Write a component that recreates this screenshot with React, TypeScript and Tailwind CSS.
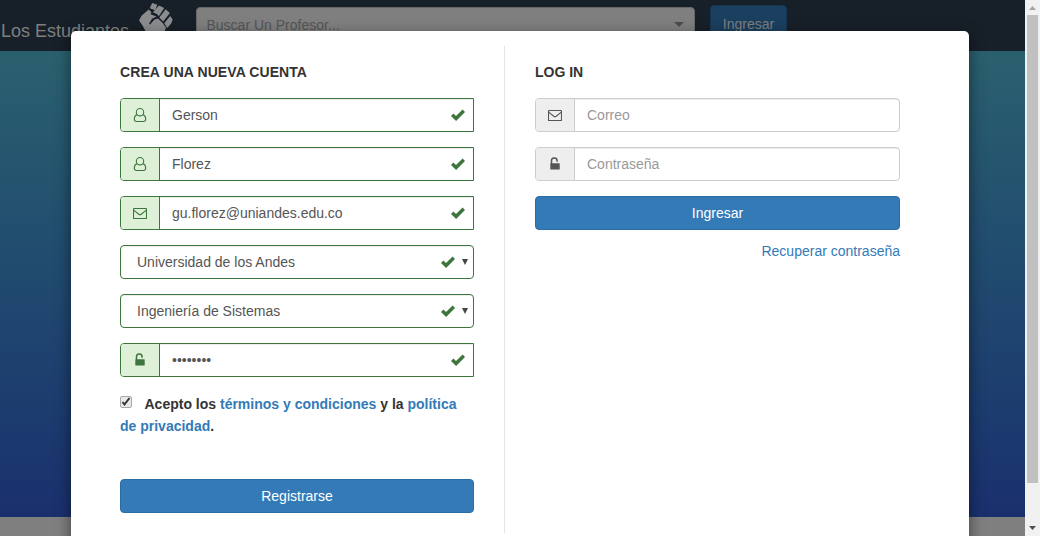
import type { ReactNode } from "react";

function UserIcon() {
  return (
    <svg width="14" height="16" viewBox="0 0 14 16" fill="none" stroke="currentColor" strokeWidth="1.100">
      <circle cx="7" cy="5.200" r="3.700" />
      <path d="M4 7.700C2.100 8.200 1.300 10.100 1.300 12c0 1.500.8 2.500 2.200 2.500h7c1.400 0 2.200-1 2.200-2.500 0-1.900-.8-3.800-2.700-4.300" />
    </svg>
  );
}

function MailIcon() {
  return (
    <svg width="14" height="14" viewBox="0 0 14 14" fill="none" stroke="currentColor" strokeWidth="1.100">
      <rect x=".5" y="2.500" width="13" height="10" rx=".5" />
      <path d="M.7 4.200C2.300 5.800 4.500 7.200 5.800 8.200q1.200.8 2.400 0C9.500 7.200 11.700 5.800 13.300 4.200" />
    </svg>
  );
}

function LockIcon() {
  return (
    <svg width="12" height="14" viewBox="0 0 12 14">
      <path d="M2.500 7V3.900a2.800 2.800 0 0 1 5.600-.2v1" fill="none" stroke="currentColor" strokeWidth="1.500" />
      <rect x="1.300" y="6.200" width="9.400" height="6.300" rx=".5" fill="currentColor" />
    </svg>
  );
}

function CheckIcon() {
  return (
    <svg width="14" height="12" viewBox="0 0 14 12" className="shrink-0 text-[#3c763d]">
      <path d="M0 6.900 2.400 4.600 5 6.900 11.600.6 14 3 5.100 11.900Z" fill="currentColor" />
    </svg>
  );
}

function Fist() {
  return (
    <svg width="36" height="36" viewBox="0 0 36 36" fill="#8a8c8e">
      <path d="m14.200 0 5.100 1.700-2.100 5.500-5.500-2Z" />
      <path d="m21 2.600 5.200 2.500-5.400 8.200-1.500-2.100-4.400-1.900Z" />
      <path d="m27.700 6.200 4.200 3.900-6.700 8.300-3.900-3.900Z" />
      <path d="m32.200 13 2.500 3.400-1.500 4-4 4.600-3-4.700Z" />
      <path d="m10.700 6.400 2.800 2.900-1 2 6 2.200-4.500 2.200-3 5 1 .9 4.500-5 3.500-1 4.200 4 3.800 5-2 5.400v7H9l-1.500-9-3-5.500L1 17.500l2.500-4.700Z" />
    </svg>
  );
}

function Field({ icon, text, valid = false }: { icon: ReactNode; text: string; valid?: boolean }) {
  return (
    <div className={`flex h-[34px] border ${valid ? "rounded-l border-[#3c763d]" : "rounded border-[#ccc]"}`}>
      <span className={`flex w-[39px] shrink-0 items-center justify-center rounded-l-[3px] border-r ${valid ? "border-[#3c763d] bg-[#dff0d8] text-[#3c763d]" : "border-[#ccc] bg-[#eee] text-[#555]"}`}>
        {icon}
      </span>
      <span className={`flex flex-1 items-center justify-between pr-[8.5px] pl-3 shadow-[inset_0_1px_1px_rgba(0,0,0,0.075)] ${valid ? "text-[#555]" : "text-[#999]"}`}>
        {text}
        {valid && <CheckIcon />}
      </span>
    </div>
  );
}

function Select({ text }: { text: string }) {
  return (
    <div className="flex h-[34px] items-center rounded border border-[#3c763d] pr-[5px] pl-4 text-[#555] shadow-[inset_0_1px_1px_rgba(0,0,0,0.075)]">
      <span className="flex-1">{text}</span>
      <CheckIcon />
      <svg width="6" height="6" viewBox="0 0 6 6" className="ml-[7.5px]"><path d="M0 0h6L3 6Z" fill="#444" /></svg>
    </div>
  );
}

function Scrollbar() {
  return (
    <div className="flex h-full w-[15px] shrink-0 flex-col items-center justify-between bg-[#f1f1f1]">
      <svg width="15" height="15" viewBox="0 0 15 15"><path d="M4 10h7L7.500 6Z" fill="#a3a3a3" /></svg>
      <div className="mb-auto h-[468px] w-[11px] bg-[#c1c1c1]" />
      <svg width="15" height="16" viewBox="0 0 15 16"><path d="M4 6h7l-3.500 4Z" fill="#505050" /></svg>
    </div>
  );
}

export default function App() {
  return (
    <div className="flex h-[536px] w-[1040px] overflow-hidden font-['Liberation_Sans',Arial,sans-serif] text-sm leading-5 text-[#333]">
      <div className="relative flex h-full w-[1025px] flex-col overflow-hidden">
        <header className="flex h-[51px] shrink-0 items-start bg-[#171f28] pl-px">
          <span className="w-[137px] pt-[21px] text-lg leading-5 text-[#7f7f7f]">Los Estudiantes</span>
          <span className="pt-[3px]"><Fist /></span>
          <div className="mt-[7px] ml-[22px] flex h-[34px] w-[499px] items-center justify-between rounded border border-[#666] bg-[#7f7f7f] pt-px pr-2.5 pl-[9.500px] text-[#555]">
            Buscar Un Profesor...
            <svg width="10" height="5" viewBox="0 0 10 5"><path d="M0 0h10L5 5Z" fill="#4c4c4c" /></svg>
          </div>
          <div className="mt-[5px] ml-[15px] flex h-[38px] w-[77px] items-center justify-center rounded border border-[#173653] bg-[#1b3f5f] text-[#7f7f7f]">Ingresar</div>
        </header>
        <div className="h-[466px] shrink-0 bg-linear-to-b from-[#2a606e] to-[#1a306e]" />
        <div className="flex-1 bg-[#7f7f7f]" />

        <main className="absolute top-[31px] left-[71px] flex h-[520px] w-[898px] rounded-[5px] bg-white pt-[15px] pl-[49px] shadow-[0_5px_15px_rgba(0,0,0,0.5)]">
          <section className="flex w-[354px] flex-col gap-[15px] pt-4">
            <h2 className="mb-[1px] font-bold tracking-[0.08px]">CREA UNA NUEVA CUENTA</h2>
            <Field icon={<UserIcon />} text="Gerson" valid />
            <Field icon={<UserIcon />} text="Florez" valid />
            <Field icon={<MailIcon />} text="gu.florez@uniandes.edu.co" valid />
            <Select text="Universidad de los Andes" />
            <Select text="Ingeniería de Sistemas" />
            <Field icon={<LockIcon />} text="••••••••" valid />
            <p className="mt-[1px] leading-[22px] font-bold">
              <span className="mr-[12.500px] inline-flex size-3 -translate-y-0.5 items-center justify-center rounded-[2px] border border-[#aaa] bg-[#e8e8e8]">
                <svg width="10" height="10" viewBox="0 0 10 10"><path d="m1.500 5 2 2.500 5-6.500" fill="none" stroke="#333" strokeWidth="2" /></svg>
              </span>
              Acepto los <span className="text-[#337ab7]">términos y condiciones</span> y la <span className="text-[#337ab7]">política de privacidad</span>.
            </p>
            <div className="mt-[27px] flex h-[34px] shrink-0 items-center justify-center rounded border border-[#2e6da4] bg-[#337ab7] text-white">Registrarse</div>
          </section>
          <div className="ml-[30px] h-[487px] w-px bg-[#e5e5e5]" />
          <section className="ml-[30px] flex w-[365px] flex-col gap-[15px] pt-4">
            <h2 className="mb-[1px] font-bold">LOG IN</h2>
            <Field icon={<MailIcon />} text="Correo" />
            <Field icon={<LockIcon />} text="Contraseña" />
            <div className="flex h-[34px] items-center justify-center rounded border border-[#2e6da4] bg-[#337ab7] text-white">Ingresar</div>
            <a className="mt-[-4px] text-right text-[#337ab7]">Recuperar contraseña</a>
          </section>
        </main>
      </div>
      <Scrollbar />
    </div>
  );
}
